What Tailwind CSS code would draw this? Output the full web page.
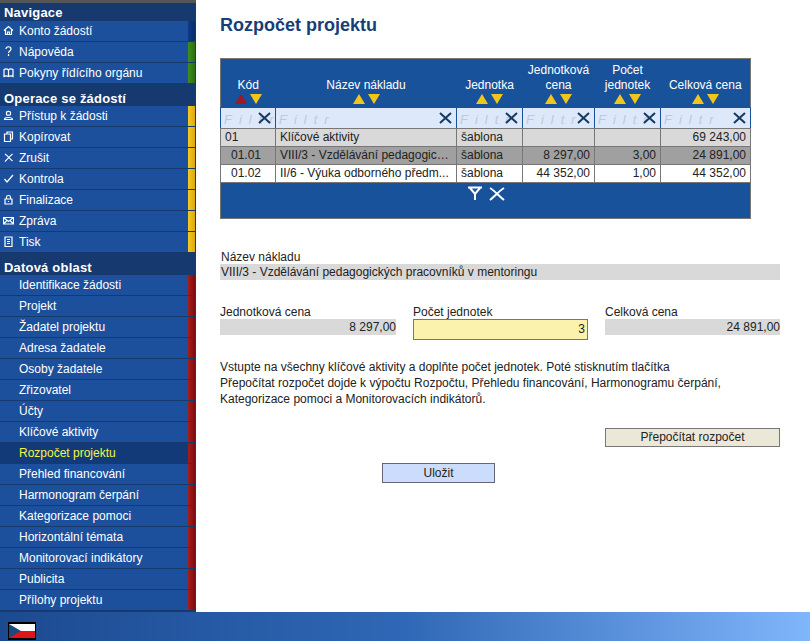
<!DOCTYPE html>
<html lang="cs">
<head>
  <meta charset="UTF-8" />
  <title>Rozpočet projektu</title>
  <script src="https://cdn.jsdelivr.net/npm/@tailwindcss/browser@4"></script>
</head>
<body class="bg-white h-[641px] overflow-hidden font-['Liberation_Sans',Arial,sans-serif] text-[12px] text-[#222]">

  <div class="flex h-[612px]">
    <!-- Menu -->
    <nav id="menu" class="w-[196px] h-full shrink-0 bg-[#163a70] border-t-[3px] border-[#555] text-white"></nav>

    <!-- Obsah -->
    <main class="flex-1 pl-[22px] pr-[31px] border-l-2 border-white">
      <h1 class="mt-[13px] h-[24px] leading-[24px] text-[18px] font-bold text-[#173e75]">Rozpočet projektu</h1>

      <table class="mt-[21px] w-[530px] table-fixed border-collapse border border-[#777] bg-[#18529b] text-[12px]">
        <colgroup>
          <col class="w-[55px]" /><col class="w-[181px]" /><col class="w-[66px]" /><col class="w-[72px]" /><col class="w-[66px]" /><col class="w-[90px]" />
        </colgroup>
        <thead>
          <tr class="h-[49px] text-white">
            <th class="font-normal align-bottom leading-[15px]">Kód<div id="s0" class="sort"></div></th>
            <th class="font-normal align-bottom leading-[15px]">Název nákladu<div class="sort"></div></th>
            <th class="font-normal align-bottom leading-[15px]">Jednotka<div class="sort"></div></th>
            <th class="font-normal align-bottom leading-[15px]">Jednotková<br />cena<div class="sort"></div></th>
            <th class="font-normal align-bottom leading-[15px]">Počet<br />jednotek<div class="sort"></div></th>
            <th class="font-normal align-bottom leading-[15px]">Celková cena<div class="sort"></div></th>
          </tr>
          <tr id="filtry" class="h-[21px] bg-[#dde8fb]"></tr>
        </thead>
        <tbody>
          <tr class="h-[18px] bg-[#d9d9d9]">
            <td class="border border-[#777] px-[4px] py-0 leading-[15px]">01</td>
            <td class="border border-[#777] px-[4px] py-0 leading-[15px] truncate">Klíčové aktivity</td>
            <td class="border border-[#777] px-[4px] py-0 leading-[15px]">šablona</td>
            <td class="border border-[#777] px-[4px] py-0 leading-[15px] text-right"></td>
            <td class="border border-[#777] px-[4px] py-0 leading-[15px] text-right"></td>
            <td class="border border-[#777] px-[4px] py-0 leading-[15px] text-right">69 243,00</td>
          </tr>
          <tr class="h-[18px] bg-[#a0a0a0]">
            <td class="border border-[#777] pl-[10px] pr-[4px] py-0 leading-[15px]">01.01</td>
            <td class="border border-[#777] px-[4px] py-0 leading-[15px] truncate">VIII/3 - Vzdělávání pedagogick...</td>
            <td class="border border-[#777] px-[4px] py-0 leading-[15px]">šablona</td>
            <td class="border border-[#777] px-[4px] py-0 leading-[15px] text-right">8 297,00</td>
            <td class="border border-[#777] px-[4px] py-0 leading-[15px] text-right">3,00</td>
            <td class="border border-[#777] px-[4px] py-0 leading-[15px] text-right">24 891,00</td>
          </tr>
          <tr class="h-[18px] bg-white">
            <td class="border border-[#777] pl-[10px] pr-[4px] py-0 leading-[15px]">01.02</td>
            <td class="border border-[#777] px-[4px] py-0 leading-[15px] truncate">II/6 - Výuka odborného předm...</td>
            <td class="border border-[#777] px-[4px] py-0 leading-[15px]">šablona</td>
            <td class="border border-[#777] px-[4px] py-0 leading-[15px] text-right">44 352,00</td>
            <td class="border border-[#777] px-[4px] py-0 leading-[15px] text-right">1,00</td>
            <td class="border border-[#777] px-[4px] py-0 leading-[15px] text-right">44 352,00</td>
          </tr>
        </tbody>
        <tfoot>
          <tr class="h-[36px]">
            <td colspan="6" class="align-top p-0">
              <div class="flex justify-center items-center gap-[6px] pl-[0px] pt-[3px] h-[18px]">
                <svg width="16" height="15" viewBox="0 0 16 15" fill="none" stroke="#fff" stroke-width="2"><path d="M1 1.5h14M3 2l5 6 5-6M8 7v7" /></svg>
                <svg width="16" height="14" viewBox="0 0 16 14" fill="none" stroke="#fff" stroke-width="2"><path d="M1 1c5 3 9 8 14 12M15 1C10 4 6 9 1 13" /></svg>
              </div>
            </td>
          </tr>
        </tfoot>
      </table>

      <section class="mt-[31px] w-[560px]">
        <div class="h-[14px] leading-[14px] pl-[1px]">Název nákladu</div>
        <div class="h-[16px] leading-[16px] bg-[#d9d9d9] pl-[1px]">VIII/3 - Vzdělávání pedagogických pracovníků v mentoringu</div>

        <div class="mt-[25px] grid grid-cols-[176px_175px_175px] gap-x-[17px]">
          <div>
            <div class="h-[14px] leading-[14px]">Jednotková cena</div>
            <div class="h-[16px] leading-[16px] bg-[#d9d9d9] text-right">8 297,00</div>
          </div>
          <div>
            <div class="h-[14px] leading-[14px]">Počet jednotek</div>
            <div class="h-[21px] leading-[19px] bg-[#fbf3ad] border border-[#777] text-right pr-[2px]">3</div>
          </div>
          <div>
            <div class="h-[14px] leading-[14px]">Celková cena</div>
            <div class="h-[16px] leading-[16px] bg-[#d9d9d9] text-right">24 891,00</div>
          </div>
        </div>

        <p class="mt-[19px] leading-[16px]">Vstupte na všechny klíčové aktivity a doplňte počet jednotek. Poté stisknutím tlačítka<br />Přepočítat rozpočet dojde k výpočtu Rozpočtu, Přehledu financování, Harmonogramu čerpání,<br />Kategorizace pomoci a Monitorovacích indikátorů.</p>

        <div class="mt-[21px] flex justify-end">
          <button class="w-[175px] h-[19px] leading-[17px] bg-[#ece8d8] border border-[#777]">Přepočítat rozpočet</button>
        </div>
        <div class="mt-[16px] pl-[162px]">
          <button class="w-[113px] h-[20px] leading-[18px] bg-[#ccdcfc] border border-[#667]">Uložit</button>
        </div>
      </section>
    </main>
  </div>

  <footer class="h-[29px] bg-gradient-to-r from-[#1c4a90] via-[#2f68b6] to-[#80b6fb] pl-[8px] pt-[10px]">
    <svg width="28" height="18" viewBox="0 0 28 18" class="block">
      <rect width="28" height="18" fill="#000" />
      <rect x="1" y="2" width="26" height="7" fill="#fff" />
      <rect x="1" y="9" width="26" height="7" fill="#e01515" />
      <path d="M1 2l12 7-12 7z" fill="#1c4a80" />
    </svg>
  </footer>

  <script>
    // Ikony menu
    const ikony = {
      dum: '<path d="M1 5.5L5.5 1.5 10 5.5M2.5 5v4.5h6V5M4.5 9.5V7h2v2.5" />',
      otaznik: '<path d="M3 3c0-3 5-3 5 0 0 2-2.500 2-2.500 4" /><path d="M5.500 8v2" />',
      kniha: '<path d="M5.500 3v6.500M1 2.500c2-1 3.500-.5 4.500.5 1-1 2.500-1.500 4.500-.5v7c-2-1-3.500-.5-4.500 0-1-.5-2.500-1-4.500 0z" />',
      osoba: '<path d="M3.500 2.500c0-1.500 4-1.500 4 0v2c0 1-4 1-4 0zM1.500 9.500c0-2 2-2 4-2s4 0 4 2z" />',
      kopie: '<path d="M4 3V1h5.500v7H8M1.500 3H7.500v7.500h-6z" />',
      krizek: '<path d="M2 2c3 2 5 5 7.500 7M9.500 2C7 4 4.500 7 2 9.500" />',
      fajfka: '<path d="M1.500 6l2.500 3 6-7" />',
      zamek: '<path d="M3.500 5V3c0-2 4-2 4 0v2M2 5h7v5H2zM5.500 7v1" />',
      obalka: '<path d="M.5 2.500h10v6.500H.5zM.5 2.500l5 4 5-4M.5 9l3.500-3.500M10.500 9L7 5.500" />',
      seznam: '<path d="M2 1h7v9.500H2zM4 3.500h3M4 5.500h3M4 7.500h3" />'
    };

    const menu = [
      { h: 'Navigace', barva: 'modra', polozky: [['Konto žádostí', 'dum', 'modra'], ['Nápověda', 'otaznik', 'zelena'], ['Pokyny řídícího orgánu', 'kniha', 'zelena']] },
      { h: 'Operace se žádostí', barva: 'zluta', polozky: [['Přístup k žádosti', 'osoba'], ['Kopírovat', 'kopie'], ['Zrušit', 'krizek'], ['Kontrola', 'fajfka'], ['Finalizace', 'zamek'], ['Zpráva', 'obalka'], ['Tisk', 'seznam']] },
      { h: 'Datová oblast', barva: 'cervena', polozky: ['Identifikace žádosti', 'Projekt', 'Žadatel projektu', 'Adresa žadatele', 'Osoby žadatele', 'Zřizovatel', 'Účty', 'Klíčové aktivity', 'Rozpočet projektu', 'Přehled financování', 'Harmonogram čerpání', 'Kategorizace pomoci', 'Horizontální témata', 'Monitorovací indikátory', 'Publicita', 'Přílohy projektu'].map(t => [t]) }
    ];
    const tridyBarev = {
      modra: 'bg-gradient-to-r from-[#0d3a86] to-[#0a2c6a]',
      zelena: 'bg-gradient-to-r from-[#3f8f1c] to-[#2c6e10]',
      zluta: 'bg-gradient-to-r from-[#f5ca1e] to-[#dba810]',
      cervena: 'bg-gradient-to-r from-[#a81c1c] to-[#7d0c0c]'
    };

    let html = '';
    menu.forEach((sekce, i) => {
      const vyska = i === 0 ? 'h-[18px] leading-[20px]' : 'h-[22px] leading-[29px]';
      html += `<div class="${vyska} pl-[4px] font-bold text-[13px] tracking-[0.2px]">${sekce.h}</div>`;
      sekce.polozky.forEach(([text, ikona, barva]) => {
        const aktivni = text === 'Rozpočet projektu';
        html += `<div class="h-[21px] flex border-b border-[#163a70] ${aktivni ? 'bg-[#123a78] text-[#f5f542]' : 'bg-[#1c4f9c]'}">
          <span class="w-[19px] shrink-0 pl-[3px] pt-[4px]">${ikona ? `<svg width="11" height="12" viewBox="0 0 11 12" fill="none" stroke="#fff" stroke-width="1.200">${ikony[ikona]}</svg>` : ''}</span>
          <span class="flex-1 leading-[20px] truncate">${text}</span>
          <span class="w-[7px] shrink-0 ${tridyBarev[barva || sekce.barva]}"></span>
          <span class="w-[1px] shrink-0 bg-[#163a70]"></span>
        </div>`;
      });
    });
    document.getElementById('menu').innerHTML = html;

    // Šipky řazení v hlavičce
    const sipka = (smer, barva) => `<svg width="12" height="10" viewBox="0 0 12 10"><path d="${smer === 'nahoru' ? 'M6 0l6 10H0z' : 'M0 0h12L6 10z'}" fill="${barva}" /></svg>`;
    document.querySelectorAll('.sort').forEach((el, i) => {
      el.className = 'flex justify-center gap-[3px] h-[14px] pt-[1px]';
      el.innerHTML = sipka('nahoru', i === 0 ? '#a01820' : '#f2c519') + sipka('dolu', '#f2c519');
    });

    // Řádek filtrů
    document.getElementById('filtry').innerHTML = [1, 2, 3, 4, 5, 6].map(() => `
      <td class="border border-[#18529b] border-b-[#777] p-0 h-[21px]">
        <div class="relative h-[20px] overflow-hidden">
          <span class="absolute left-[3px] top-[2px] italic text-[13px] tracking-[7px] text-[#c4c8d0] font-['Liberation_Sans',sans-serif]">Filtr</span>
          <svg class="absolute right-[4px] top-[4px]" width="13" height="12" viewBox="0 0 13 12" fill="none" stroke="#123a63" stroke-width="2"><path d="M1 1l11 10M12 1L1 11" /></svg>
        </div>
      </td>`).join('');
  </script>
</body>
</html>
